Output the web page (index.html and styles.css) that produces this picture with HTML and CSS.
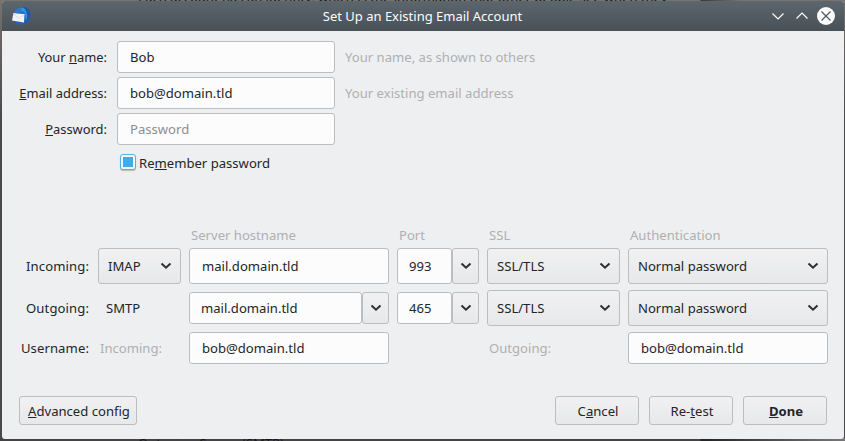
FILE: index.html
```html
<!DOCTYPE html>
<html lang="en">
<head>
<meta charset="utf-8">
<title>Set Up an Existing Email Account</title>
<link rel="stylesheet" href="styles.css">
</head>
<body>
<svg width="0" height="0" class="defs">
  <symbol id="chev" viewBox="0 0 12 8"><path d="M1.500 1.500 6 5.700l4.500-4.200" fill="none" stroke="#2b2f33" stroke-width="2"/></symbol>
</svg>
<div class="behind behind-top">Each account has an identity, which is the information that other people see when they</div>
<div class="behind behind-bottom">Outgoing Server (SMTP)</div>
<div class="window">
  <header class="titlebar">
    <svg class="logo" width="22" height="20" viewBox="0 0 22 20">
      <path d="M6 4C8 0 16-.4 19 4c2 4 2 8-1 12-3 2.500-7 3.500-11 2L3 14c-1-3 1-6 3-10z" fill="#2464b4"/>
      <path d="M8 3c4-2.500 9-1 10 3 1.500 4 0 8-2 10l-1-9z" fill="#2c93e0"/>
      <path d="M13 .800c4 .2 7 3 7 7.200 0 5-3 9-7 10 3-3 5-6 4-10-.5-3-2-5-4-7.200z" fill="#2456a8"/>
      <path d="M3.500 7 14.500 8l-.5 8.500-12-2z" fill="#f4f2f0"/>
      <path d="m3.500 7.500 5 5 6-4" fill="none" stroke="#dddbd9"/>
      <path d="M4 7c1-4 4-5.500 8-5.500L10 5l5 3z" fill="#2f78c5"/>
    </svg>
    <h1>Set Up an Existing Email Account</h1>
    <div class="controls">
      <svg width="14" height="18" viewBox="0 0 14 18"><path d="m1.500 6.500 5.500 5.500 5.500-5.500" fill="none" stroke="#fcfcfc" stroke-width="1.200"/></svg>
      <svg width="14" height="18" viewBox="0 0 14 18"><path d="m1.500 11.500 5.500-5.500 5.500 5.500" fill="none" stroke="#fcfcfc" stroke-width="1.200"/></svg>
      <svg width="18" height="18" viewBox="0 0 18 18"><circle cx="9" cy="9" r="9" fill="#fcfcfc"/><path d="m4.500 4.500 9 9m0-9-9 9" stroke="#4d565d" stroke-width="1.200"/></svg>
    </div>
  </header>
  <main>
    <section class="identity">
      <label>Your <u>n</u>ame:</label><div class="field">Bob</div><span class="dim">Your name, as shown to others</span>
      <label><u>E</u>mail address:</label><div class="field">bob@domain.tld</div><span class="dim">Your existing email address</span>
      <label><u>P</u>assword:</label><div class="field placeholder">Password</div>
    </section>
    <div class="remember"><i class="check"></i><span>Re<u>m</u>ember password</span></div>
    <section class="servers">
      <span class="dim head host">Server hostname</span><span class="dim head">Port</span><span class="dim head">SSL</span><span class="dim head">Authentication</span>

      <label>Incoming:</label>
      <div class="select">IMAP<svg><use href="#chev"/></svg></div>
      <div class="field">mail.domain.tld</div>
      <div class="combo"><div class="field">993</div><div class="drop"><svg><use href="#chev"/></svg></div></div>
      <div class="select">SSL/TLS<svg><use href="#chev"/></svg></div>
      <div class="select">Normal password<svg><use href="#chev"/></svg></div>

      <label>Outgoing:</label>
      <span class="protocol">SMTP</span>
      <div class="combo short"><div class="field">mail.domain.tld</div><div class="drop"><svg><use href="#chev"/></svg></div></div>
      <div class="combo short"><div class="field">465</div><div class="drop"><svg><use href="#chev"/></svg></div></div>
      <div class="select">SSL/TLS<svg><use href="#chev"/></svg></div>
      <div class="select">Normal password<svg><use href="#chev"/></svg></div>

      <label>Username:</label>
      <span class="dim head">Incoming:</span>
      <div class="field">bob@domain.tld</div>
      <span></span>
      <span class="dim head">Outgoing:</span>
      <div class="field">bob@domain.tld</div>
    </section>
    <footer>
      <div class="button advanced"><span><u>A</u>dvanced config</span></div>
      <div class="button"><span>C<u>a</u>ncel</span></div>
      <div class="button"><span>Re-<u>t</u>est</span></div>
      <div class="button default"><span><u>D</u>one</span></div>
    </footer>
  </main>
</div>
</body>
</html>
```
FILE: styles.css
```css
* { box-sizing: border-box; }
body {
  margin: 0;
  height: 441px;
  overflow: hidden;
  position: relative;
  padding: 1px 1px 2px 2px;
  background: linear-gradient(90deg, #444244 0 700px, #232323 701px, #777 845px) bottom / 100% 3px no-repeat,
    linear-gradient(90deg, #77736f 0 700px, #3a3836 701px, #77736f 740px) top / 100% 4px no-repeat,
    linear-gradient(#77736f, #4a484a 120px);
  font: 13.1px/18px "Noto Sans", sans-serif;
  color: #232629;
}
.defs { position: absolute; }
.behind { position: absolute; left: 138px; white-space: nowrap; color: #181818; font-size: 13px; }
.behind-top { top: -12px; }
.behind-bottom { top: 434px; }
.window {
  position: relative;
  height: 438px;
  background: #eeeff1;
  border-radius: 3px;
  overflow: hidden;
}
.titlebar {
  height: 30px;
  display: grid;
  grid-template-columns: 75px 1fr 75px;
  align-items: center;
  padding: 0 9px 0 8px;
  background: linear-gradient(#5c666d, #495157);
  color: #fcfcfc;
}
h1 { margin: 0; font: inherit; font-size: 13px; text-align: center; }
.controls { display: flex; justify-content: flex-end; gap: 10px; }
.controls svg:last-child { margin-left: -2px; }
main { padding: 10px 17px 0 17px; }
u { text-decoration: underline; text-decoration-thickness: 1px; text-underline-offset: 1px; text-decoration-skip-ink: none; }
.identity {
  display: grid;
  grid-template-columns: 88px 218px 1fr;
  grid-auto-rows: 32px;
  gap: 4px 10px;
  align-items: center;
}
label { text-align: right; white-space: nowrap; }
.identity label { font-size: 12.9px; }
.dim { color: #afb0b1; }
.field {
  height: 32px;
  display: flex;
  align-items: center;
  border: 1px solid #bcbdbf;
  border-radius: 3px;
  background: #fcfcfc;
  padding: 0 12px;
}
.placeholder { color: #8d8e8f; }
.remember { display: flex; gap: 3px; height: 18px; margin: 9px 0 0 101px; }
.check {
  width: 16px;
  height: 16px;
  border: 1px solid #4fb3ea;
  border-radius: 3px;
  background: linear-gradient(#3daee9, #3daee9) content-box, #f2f7fa;
  padding: 2px;
  box-shadow: 0 1px 1px #bbb;
}
.servers {
  display: grid;
  grid-template-columns: 71px 83px 200px 82px 133px 200px;
  grid-template-rows: 18px 36px 36px 32px;
  gap: 6px 8px;
  align-items: center;
  margin-top: 52px;
  /* the last column reaches one pixel past the button row */
  margin-right: -1px;
}
.servers label { margin-right: 1px; letter-spacing: 0.1px; }
.head { padding-left: 2px; }
.head:nth-child(-n + 4) { padding-top: 4px; }
.host { grid-column: 3; }
.select, .drop, .button {
  display: flex;
  align-items: center;
  border: 1px solid #bcbdbf;
  border-radius: 3px;
  background: linear-gradient(#f1f1f2, #e7e8ea);
}
.select { height: 36px; padding: 0 8px 0 9px; justify-content: space-between; }
.select svg, .drop svg { width: 12px; height: 8px; flex: none; }
.servers > .field { height: 100%; }
.protocol { padding-left: 8px; }
.combo { display: flex; height: 36px; }
.combo.short { height: 32px; }
.combo .field { flex: 1; height: 100%; padding: 0 11px; }
.drop { width: 27px; justify-content: center; }
footer { display: flex; gap: 10px; margin-top: 32px; }
.button { width: 84px; height: 29px; padding-left: 2px; justify-content: center; }
.advanced { width: 118px; margin-right: auto; }
.default { font-weight: bold; }
```
